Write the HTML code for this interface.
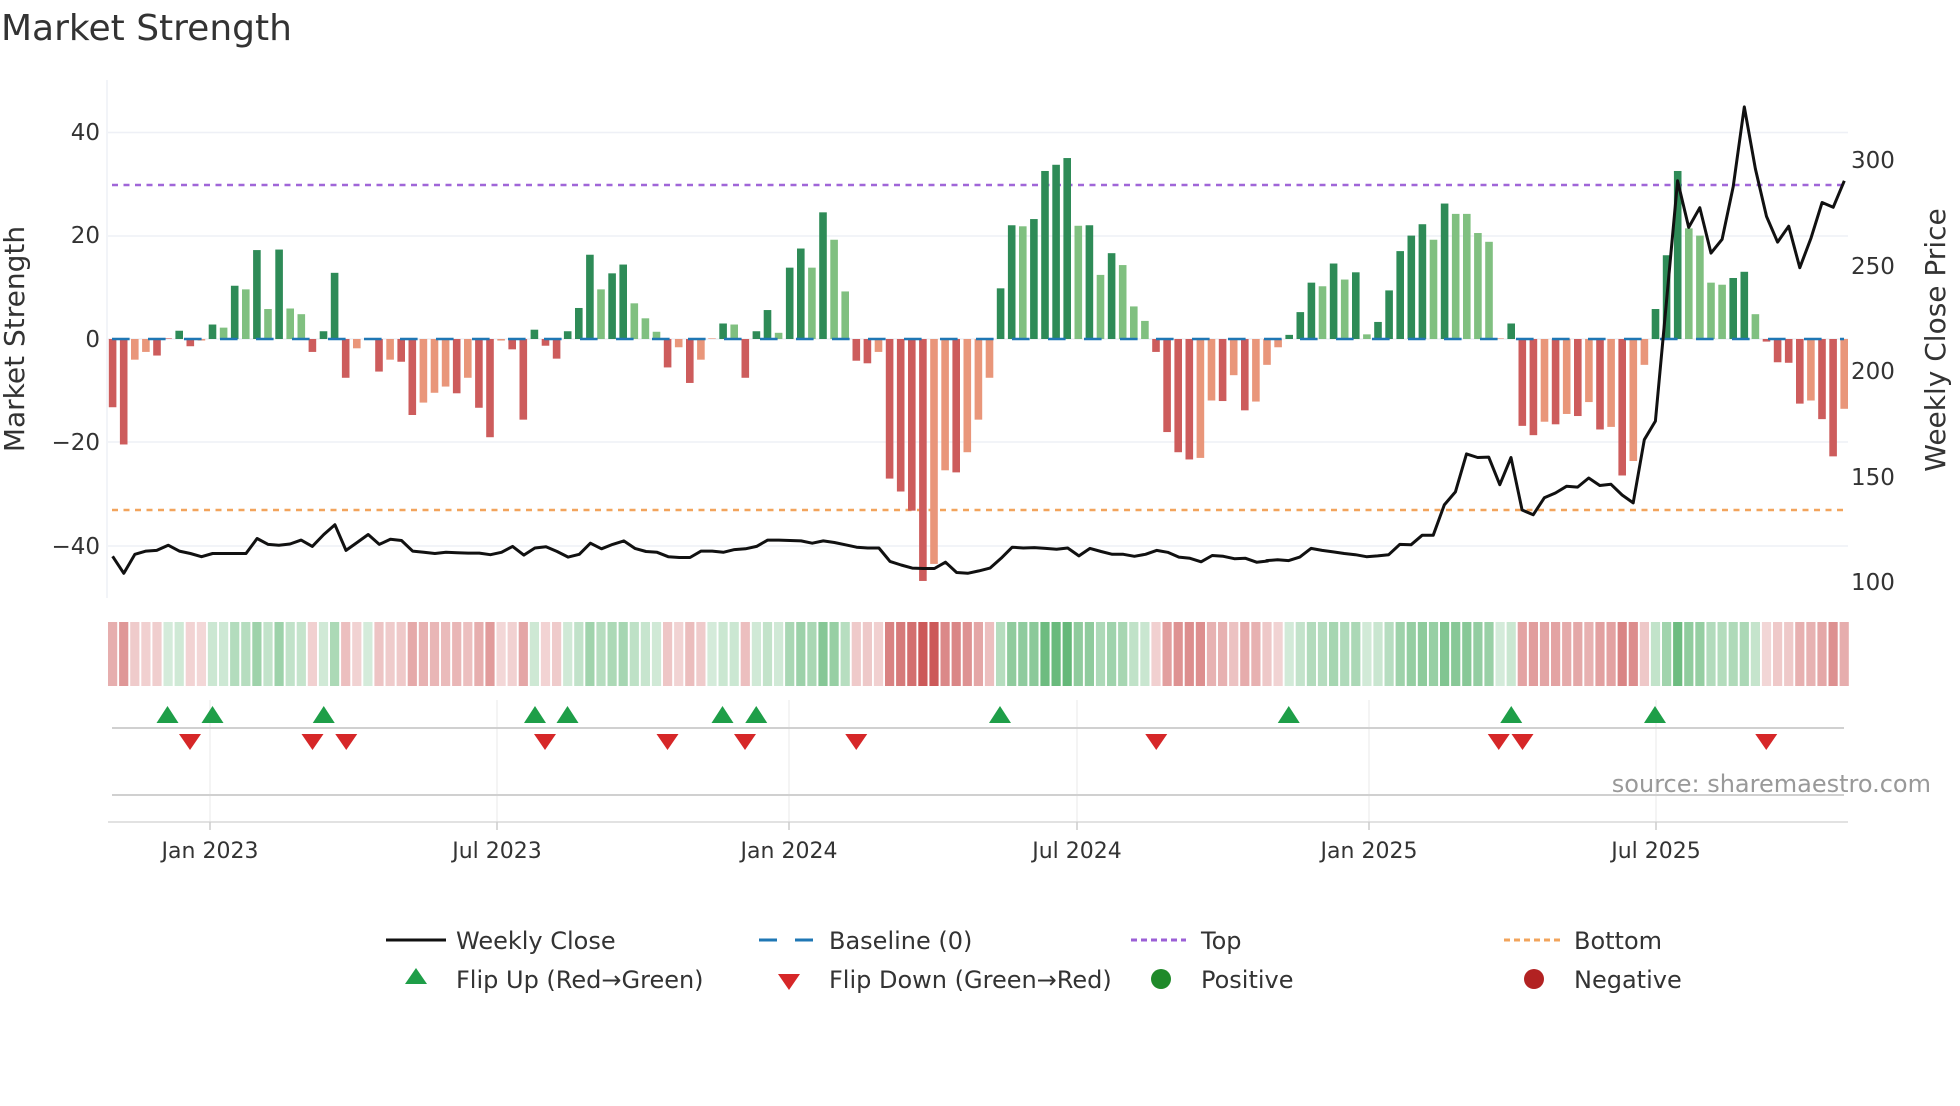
<!DOCTYPE html>
<html><head><meta charset="utf-8">
<style>
html,body{margin:0;padding:0;background:#fff;}
body{width:1960px;height:1102px;overflow:hidden;font-family:"DejaVu Sans","Liberation Sans",sans-serif;}
svg text{font-family:"DejaVu Sans","Liberation Sans",sans-serif;}
</style></head>
<body>
<svg id="s" width="1960" height="1102" xmlns="http://www.w3.org/2000/svg">
<text x="1" y="40" font-size="36" fill="#333">Market Strength</text>
<g font-size="23" fill="#333" text-anchor="end">
<text x="100" y="140">40</text>
<text x="100" y="347">0</text>
<text x="100" y="243">20</text>
<text x="100" y="450">−20</text>
<text x="100" y="554">−40</text>
</g>
<g font-size="23" fill="#333" text-anchor="start">
<text x="1851" y="168">300</text>
<text x="1851" y="274">250</text>
<text x="1851" y="379">200</text>
<text x="1851" y="485">150</text>
<text x="1851" y="590">100</text>
</g>
<text transform="translate(24,339) rotate(-90)" font-size="28" fill="#333" text-anchor="middle">Market Strength</text>
<text transform="translate(1945,340) rotate(-90)" font-size="28" fill="#333" text-anchor="middle">Weekly Close Price</text>
<g id="grid"></g>
<g id="bars"></g>
<g id="heat"></g>
<g id="marks"></g>
<text x="1931" y="792" font-size="24" fill="#999" text-anchor="end">source: sharemaestro.com</text>
<g font-size="22" fill="#333" text-anchor="middle">
<text x="210" y="858">Jan 2023</text>
<text x="497" y="858">Jul 2023</text>
<text x="789" y="858">Jan 2024</text>
<text x="1077" y="858">Jul 2024</text>
<text x="1369" y="858">Jan 2025</text>
<text x="1656" y="858">Jul 2025</text>
</g>
<g font-size="24" fill="#333">
<line x1="386" y1="940" x2="446" y2="940" stroke="#111" stroke-width="3"/>
<text x="456" y="949">Weekly Close</text>
<line x1="759" y1="940" x2="815" y2="940" stroke="#1f77b4" stroke-width="3" stroke-dasharray="18,18"/>
<text x="829" y="949">Baseline (0)</text>
<line x1="1131" y1="940" x2="1186" y2="940" stroke="#9b5fd6" stroke-width="3" stroke-dasharray="6,4"/>
<text x="1201" y="949">Top</text>
<line x1="1504" y1="940" x2="1560" y2="940" stroke="#f2a45c" stroke-width="3" stroke-dasharray="6,4"/>
<text x="1574" y="949">Bottom</text>
<polygon points="416,968 427,984 405,984" fill="#1e9e48"/>
<text x="456" y="988">Flip Up (Red→Green)</text>
<polygon points="778,974 800,974 789,990" fill="#d62728"/>
<text x="829" y="988">Flip Down (Green→Red)</text>
<circle cx="1161" cy="979" r="10" fill="#1f8a2a"/>
<text x="1201" y="988">Positive</text>
<circle cx="1534" cy="979" r="10" fill="#b22222"/>
<text x="1574" y="988">Negative</text>
</g>
</svg>
<script>
var NS="http://www.w3.org/2000/svg";
function el(p,t,a){var e=document.createElementNS(NS,t);for(var k in a)e.setAttribute(k,a[k]);document.getElementById(p).appendChild(e);return e;}
var B="-13.2R -20.4R -4S -2.5S -3.2R 0R 1.6D -1.4R -0.3S 2.8D 2.2L 10.3D 9.6L 17.2D 5.8L 17.3D 5.9L 4.8L -2.5R 1.5D 12.8D -7.5R -1.8S 0S -6.3R -4S -4.4R -14.7R -12.3S -10.4S -9.2S -10.5R -7.5S -13.3R -19R -0.3S -2R -15.6R 1.8D -1.3R -3.8R 1.5D 6D 16.3D 9.6L 12.7D 14.4D 6.9L 4L 1.4L -5.5R -1.6S -8.5R -4S 0S 3D 2.8L -7.5R 1.5D 5.6D 1.2L 13.8D 17.5D 13.8L 24.5D 19.2L 9.2L -4.2R -4.7R -2.5S -27R -29.5R -33.2R -46.8R -43.5S -25.4S -25.8R -21.9S -15.6S -7.5S 9.8D 22D 21.8L 23.2D 32.5D 33.7D 35D 21.9L 22D 12.4L 16.6D 14.3L 6.3L 3.5L -2.5R -18R -21.9R -23.3R -23S -11.9S -12R -7S -13.8R -12.1S -5S -1.6S 0.8D 5.2D 10.9D 10.2L 14.6D 11.5L 12.9D 0.9L 3.3D 9.4D 17D 20D 22.2D 19.2L 26.2D 24.2L 24.2L 20.5L 18.8L 0S 3D -16.8R -18.6R -16S -16.5R -14.5S -14.9R -12.2S -17.5R -17S -26.4R -23.6S -5S 5.8D 16.2D 32.5D 21.4L 20L 10.9L 10.5L 11.8D 13D 4.8L -0.5R -4.5R -4.6R -12.5R -11.9S -15.5R -22.7R -13.5S".split(" ");
var col={D:"#2e8b57",L:"#80c080",R:"#cd5c5c",S:"#e9967a"};
var Z=339,U=5.17,P=11.1,X0=112.6;
[132.5,236,339,442,546].forEach(function(y){el("grid","line",{x1:108,x2:1848,y1:y,y2:y,stroke:"#eef0f6","stroke-width":1.5});});
el("grid","line",{x1:107,x2:107,y1:80,y2:598,stroke:"#eef0f6","stroke-width":1.5});
[210,497,789,1077,1369,1656].forEach(function(x){el("grid","line",{x1:x,x2:x,y1:700,y2:822,stroke:"#f0f0f0","stroke-width":1.5});});
el("grid","line",{x1:112,x2:1844,y1:728,y2:728,stroke:"#d0d0d0","stroke-width":2});
el("grid","line",{x1:112,x2:1844,y1:795,y2:795,stroke:"#d0d0d0","stroke-width":2});
el("grid","line",{x1:108,x2:1848,y1:822,y2:822,stroke:"#d8d8d8","stroke-width":1.5});
[210,497,789,1077,1369,1656].forEach(function(x){el("grid","line",{x1:x,x2:x,y1:822,y2:830,stroke:"#ccc","stroke-width":1.5});});
el("bars","line",{x1:112,x2:1844,y1:185,y2:185,stroke:"#a066d8","stroke-width":2.5,"stroke-dasharray":"6,5.5"});
el("bars","line",{x1:112,x2:1844,y1:510,y2:510,stroke:"#f2a45c","stroke-width":2.5,"stroke-dasharray":"6,5.5"});
B.forEach(function(s,i){
 var t=s.slice(-1),v=parseFloat(s),x=X0+i*P;
 var h=Math.abs(v)*U;if(h<0.6)h=0.6;
 el("bars","rect",{x:x-3.8,y:v>=0?Z-h:Z,width:7.6,height:h,fill:col[t]});
 var a=Math.min(1,Math.abs(v)/40);
 var c=v>=0?("rgba(60,165,85,"+(0.22+0.65*a)+")"):("rgba(200,75,75,"+(0.22+0.7*a)+")");
 el("heat","rect",{x:x-4.6,y:622,width:9.2,height:64,fill:c});
});
el("bars","line",{x1:112,x2:1844,y1:339,y2:339,stroke:"#1f77b4","stroke-width":2.5,"stroke-dasharray":"17.6,18.4"});
function pts(base,arr){var o=[];for(var i=0;i<arr.length;i+=2)o.push((base+arr[i]/2.61).toFixed(1)+","+(80+arr[i+1]/2.53).toFixed(1));return o;}
var z1=[33,1205,62,1248,91,1200,120,1192,148,1190,178,1177,207,1192,236,1198,265,1206,294,1198,323,1198,352,1198,381,1198,410,1160,439,1175,467,1177,496,1174,525,1164,554,1180,584,1150,613,1125,642,1190,671,1170,700,1150,729,1175,758,1162,787,1165,816,1192,845,1195,874,1198,903,1195,932,1196,961,1197,990,1197,1019,1201,1048,1195,1077,1180,1106,1202,1135,1184,1164,1181,1193,1193,1222,1207,1251,1200,1280,1172,1309,1186,1338,1175,1367,1166,1396,1185,1425,1193,1454,1195,1483,1206,1512,1208];
var z2=[26,1208,55,1192,84,1192,113,1195,142,1188,171,1186,200,1180,229,1164,258,1164,287,1165,316,1166,345,1172,374,1166,403,1170,432,1176,461,1182,490,1184,519,1184,548,1218,577,1227,606,1235,635,1236,664,1236,693,1220,722,1246,751,1248,780,1242,809,1235,838,1210,867,1182,896,1184,925,1183,954,1185,983,1187,1012,1184,1041,1204,1070,1185,1099,1193,1128,1200,1157,1200,1186,1205,1215,1200,1244,1190,1273,1195,1302,1207,1331,1210,1360,1219,1389,1203,1418,1205,1447,1211,1476,1210,1505,1220,1534,1217];
var z3=[17,1216,46,1214,75,1216,104,1207,133,1185,162,1190,191,1194,220,1198,249,1201,278,1206,307,1204,336,1201,365,1175,394,1176,423,1152,452,1152,481,1075,510,1042,539,946,568,955,597,954,626,1024,655,955,684,1088,713,1100,742,1057,771,1045,800,1028,829,1030,858,1007,887,1026,916,1023,945,1050,974,1070,1003,910,1032,863,1061,560,1090,255,1119,373,1148,323,1177,438,1206,403,1235,270,1264,68,1293,225,1322,345,1351,410,1380,370,1409,475,1438,400,1467,310,1496,322,1525,255];
var all=pts(100,z1).concat(pts(680,z2)).concat(pts(1260,z3));
el("bars","polyline",{points:all.join(" "),fill:"none",stroke:"#111","stroke-width":3,"stroke-linejoin":"round"});
[134,170,259,428,454,578,605,800,1031,1209,1324].forEach(function(d){var x=d*1.25;el("marks","polygon",{points:x+",706 "+(x+11)+",723 "+(x-11)+",723",fill:"#1e9e48"});});
[152,250,277,436,534,596,685,925,1199,1218,1413].forEach(function(d){var x=d*1.25;el("marks","polygon",{points:(x-11)+",734 "+(x+11)+",734 "+x+",750",fill:"#d62728"});});
</script>
</body></html>
